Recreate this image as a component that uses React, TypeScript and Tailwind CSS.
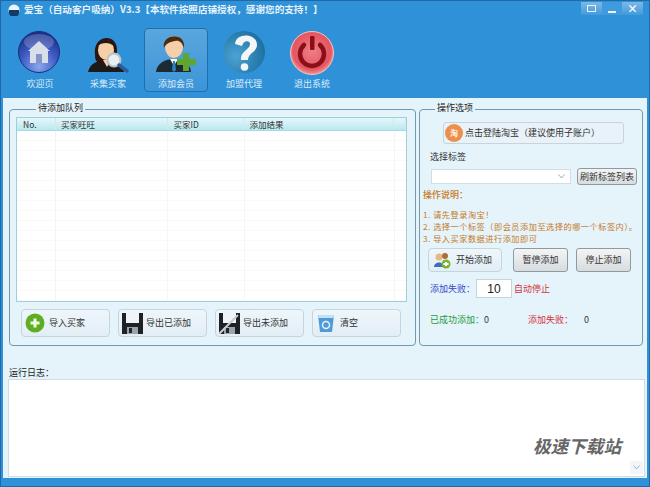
import type { ReactNode } from "react";

const font = "font-['Noto_Sans_CJK_SC','Liberation_Sans',sans-serif]";

function HomeIcon() {
  return (
    <svg width="44" height="44" viewBox="0 0 44 44">
      <defs>
        <radialGradient id="homeBall" cx="50%" cy="85%" r="80%">
          <stop offset="0%" stopColor="#8aa6ee" />
          <stop offset="55%" stopColor="#3f5cc4" />
          <stop offset="100%" stopColor="#1d2f8a" />
        </radialGradient>
      </defs>
      <circle cx="21" cy="21" r="20.5" fill="url(#homeBall)" stroke="#1a2f80" />
      <ellipse cx="21" cy="11" rx="15" ry="8" fill="#fff" opacity="0.2" />
      <path d="M21 10 L32 20 L30 20 L30 32 L12 32 L12 20 L10 20 Z" fill="#d9deea" />
      <rect x="18" y="23" width="6" height="9" fill="#8496c8" />
    </svg>
  );
}

function FemaleIcon() {
  return (
    <svg width="44" height="44" viewBox="0 0 44 44">
      <path d="M2 41 C4 32 12 29 21 29 C31 29 37 32 38 41 Z" fill="#1f1a1a" />
      <path d="M9 24 C6 3 32 1 31 20 C31 27 30 31 27 32 L13 32 C10 31 9 28 9 24 Z" fill="#2a1510" />
      <ellipse cx="20" cy="19" rx="8" ry="10" fill="#f6cfa8" />
      <path d="M11 15 C14 7 27 7 29 16 C24 11 17 11 11 15 Z" fill="#2a1510" />
      <path d="M17 29 L25 29 L21 36 Z" fill="#f6cfa8" />
      <circle cx="28" cy="29" r="6.5" fill="#e9eef0" stroke="#b9c3c8" strokeWidth="2" />
      <path d="M33 34 L41 40" stroke="#2b5f9a" strokeWidth="3.5" strokeLinecap="round" />
    </svg>
  );
}

function MaleIcon() {
  return (
    <svg width="44" height="44" viewBox="0 0 44 44">
      <path d="M2 41 C3 32 11 28 20 28 C30 28 36 32 37 41 Z" fill="#1c2a33" />
      <path d="M16 28 L24 28 L20 35 Z" fill="#fff" />
      <path d="M19 30 L21 30 L22 39 L20 41 L18 39 Z" fill="#2d7fc0" />
      <ellipse cx="20" cy="16" rx="9" ry="11" fill="#f6cfa8" />
      <path d="M10 17 C7 3 32 0 30 17 C28 11 25 9 21 10 C17 11 13 11 10 17 Z" fill="#4a2c12" />
      <path d="M29 22 L35 22 L35 28 L42 28 L42 34 L35 34 L35 40 L29 40 L29 34 L23 34 L23 28 L29 28 Z" fill="#5fa52e" />
    </svg>
  );
}

function HelpIcon() {
  return (
    <svg width="44" height="44" viewBox="0 0 44 44">
      <defs>
        <radialGradient id="helpBall" cx="30%" cy="60%" r="75%">
          <stop offset="0%" stopColor="#4ca4d4" />
          <stop offset="100%" stopColor="#1b6d9c" />
        </radialGradient>
      </defs>
      <circle cx="22" cy="21" r="21" fill="url(#helpBall)" />
      <path
        d="M13 13 C14 1 35 2 35 14 C35 21 26 22 26 29 L19 29 C18 20 28 19 28 13 C28 9 21 9 20 15 Z"
        fill="#f2f6f8"
      />
      <circle cx="22.5" cy="36" r="3.8" fill="#f2f6f8" />
    </svg>
  );
}

function PowerIcon() {
  return (
    <svg width="44" height="44" viewBox="0 0 44 44">
      <defs>
        <radialGradient id="powerBall" cx="50%" cy="45%" r="60%">
          <stop offset="0%" stopColor="#ee8088" />
          <stop offset="72%" stopColor="#e4555f" />
          <stop offset="100%" stopColor="#f8b4b0" />
        </radialGradient>
      </defs>
      <circle cx="22" cy="22" r="21.5" fill="url(#powerBall)" stroke="#f6c2bd" />
      <path d="M14 14 A12 12 0 1 0 30 14" fill="none" stroke="#8a0f18" strokeWidth="4.5" strokeLinecap="round" />
      <rect x="20" y="5" width="4.5" height="14" rx="1" fill="#8a0f18" />
    </svg>
  );
}

function FloppyIcon({ slash }: { slash?: boolean }) {
  return (
    <svg width="21" height="21" viewBox="0 0 21 21">
      <path d="M0 0 H21 V21 H0 Z" fill="#1c2226" />
      <rect x="4" y="0" width="13" height="10" fill="#f0f4f6" />
      <rect x="5" y="14" width="11" height="7" fill="#9aa4a9" />
      <rect x="7" y="15" width="3" height="5" fill="#20262a" />
      {slash && <path d="M0 21 L19 2" stroke="#c8ccd0" strokeWidth="2" />}
    </svg>
  );
}

function ToolItem({ label, active, children }: { label: string; active?: boolean; children: ReactNode }) {
  return (
    <div
      className={`flex h-[64px] w-[64px] flex-col items-center pt-[2px] rounded-sm ${
        active ? "border border-[#1f6fae] bg-gradient-to-b from-[#5aa6dd] to-[#3b95d8]" : "border border-transparent"
      }`}
    >
      {children}
      <span className="mt-[3px] text-[9px] leading-[12px] text-[#dcecf8]">{label}</span>
    </div>
  );
}

function ActionButton({ label, icon, width }: { label: string; icon: ReactNode; width: string }) {
  return (
    <div className={`flex h-[28px] ${width} items-center gap-[3px] rounded-sm border border-[#c5d5de] bg-gradient-to-b from-[#eef6fb] to-[#e2eef5] pl-[2px]`}>
      <span className="flex w-[22px] shrink-0 justify-center">{icon}</span>
      <span className="text-[9px] text-[#333] whitespace-nowrap">{label}</span>
    </div>
  );
}

function GrayButton({ label, width }: { label: string; width: string }) {
  return (
    <div className={`flex h-[24px] ${width} items-center justify-center rounded-[3px] border border-[#8d9aa2] bg-gradient-to-b from-[#f4f4f4] to-[#d8dcdf] text-[9px] text-[#333] whitespace-nowrap`}>
      {label}
    </div>
  );
}

const headers = [
  { label: "No.", width: "w-[39px] pl-[6px]" },
  { label: "买家旺旺", width: "w-[112px] pl-[5px]" },
  { label: "买家ID", width: "w-[77px] pl-[6px]" },
  { label: "添加结果", width: "w-[150px] pl-[5px]" },
  { label: "", width: "w-[12px]" },
];

const rows = Array.from({ length: 17 }, (_, i) => i);

export default function App() {
  return (
    <div className={`${font} relative flex h-[487px] w-[650px] flex-col overflow-hidden border border-[#1e6aa8] bg-[#2f92d9] px-[2px] pb-[8px]`}>
      {/* title bar */}
      <div className="flex h-[17px] items-center pl-[5px] pt-[1px]">
        <svg width="12" height="12" viewBox="0 0 12 12" className="mr-[4px]">
          <circle cx="6" cy="6" r="5.5" fill="#eef5fa" />
          <path d="M1 6 H11 V9 A5 4 0 0 1 1 9 Z" fill="#123c66" />
        </svg>
        <span className="text-[9.6px] font-bold leading-none whitespace-nowrap text-[#e8f3fb]">
          爱宝（自动客户吸纳）V3.3【本软件按照店铺授权，感谢您的支持！】
        </span>
        <div className="ml-auto mr-[4px] flex h-[13px] self-start">
          <span className="flex w-[21px] items-center justify-center bg-gradient-to-b from-[#7db8e3] to-[#3f9ade]">
            <span className="h-[7px] w-[9px] border border-[#e8f3fb]" />
          </span>
          <span className="flex w-[20px] items-end justify-center bg-[#3f9ade] pb-[2px]">
            <span className="h-[2px] w-[8px] bg-[#e8f3fb]" />
          </span>
          <span className="flex w-[21px] items-center justify-center bg-gradient-to-b from-[#7db8e3] to-[#3f9ade] text-[11px] font-bold leading-none text-white">×</span>
        </div>
      </div>

      {/* toolbar */}
      <div className="flex h-[80px] items-start gap-[4px] pl-[5px] pt-[10px]">
        <ToolItem label="欢迎页"><HomeIcon /></ToolItem>
        <ToolItem label="采集买家"><FemaleIcon /></ToolItem>
        <ToolItem label="添加会员" active><MaleIcon /></ToolItem>
        <ToolItem label="加盟代理"><HelpIcon /></ToolItem>
        <ToolItem label="退出系统"><PowerIcon /></ToolItem>
      </div>

      {/* content */}
      <div className="relative flex flex-1 flex-col bg-[#e5f3fb] pl-[6px] pr-[4px] pt-[4px]">
        <div className="flex gap-[3px]">
          <fieldset className="h-[244px] w-[407px] rounded-sm border border-[#6f9bb0] px-[6px]">
            <legend className="ml-[20px] h-[15px] px-[2px] text-[9px] leading-[12px] text-[#222]">待添加队列</legend>
            <div className="h-[185px] w-[391px] overflow-hidden border border-[#9fd0da] bg-white">
              <div className="flex h-[13px] border-b border-[#a5dbe4] bg-gradient-to-b from-[#e6f7fa] to-[#b9e8ef]">
                {headers.map((h) => (
                  <div key={h.label} className={`${h.width} border-r border-[#cfeaef] text-[8.5px] leading-[12px] text-[#333]`}>
                    {h.label}
                  </div>
                ))}
              </div>
              {rows.map((r) => (
                <div key={r} className="flex h-[10px] border-b border-[#faf9f5]">
                  <div className="w-[39px] border-r border-[#f3f3f0]" />
                  <div className="w-[112px] border-r border-[#f5f5f2]" />
                  <div className="w-[77px] border-r border-[#f5f5f2]" />
                  <div className="w-[150px] border-r border-[#f5f5f2]" />
                </div>
              ))}
            </div>
            <div className="mt-[7px] flex gap-[8px] pl-[5px]">
              <ActionButton
                width="w-[89px]"
                label="导入买家"
                icon={
                  <svg width="20" height="20" viewBox="0 0 20 20">
                    <circle cx="10" cy="10" r="9.5" fill="#5fae22" />
                    <path d="M8.5 5.5 H11.5 V8.5 H14.5 V11.5 H11.5 V14.5 H8.5 V11.5 H5.5 V8.5 H8.5 Z" fill="#f2fbe6" />
                  </svg>
                }
              />
              <ActionButton width="w-[89px]" label="导出已添加" icon={<FloppyIcon />} />
              <ActionButton width="w-[89px]" label="导出未添加" icon={<FloppyIcon slash />} />
              <ActionButton
                width="w-[89px]"
                label="清空"
                icon={
                  <svg width="18" height="20" viewBox="0 0 18 20">
                    <path d="M1 2 H17 L15 19 H3 Z" fill="#4f9bd8" />
                    <path d="M1 2 H17 L16.5 5 H1.5 Z" fill="#c4e0f2" />
                    <circle cx="9" cy="12" r="3.5" fill="none" stroke="#e6f3fb" strokeWidth="1.5" />
                  </svg>
                }
              />
            </div>
          </fieldset>

          <fieldset className="h-[244px] w-[224px] rounded-sm border border-[#6f9bb0] px-[3px]">
            <legend className="ml-[12px] h-[15px] px-[2px] text-[9px] leading-[12px] text-[#222]">操作选项</legend>
            <div className="ml-[20px] mt-[5px] flex h-[22px] w-[181px] items-center rounded-[3px] border border-[#c5d5de] bg-[#e9f2f8] pl-[1px]">
              <span className="mr-[2px] flex h-[18px] w-[18px] items-center justify-center rounded-full bg-[#ec8f4b] text-[8px] font-bold text-[#fff3e6]">淘</span>
              <span className="text-[9px] text-[#333] whitespace-nowrap">点击登陆淘宝（建议使用子账户）</span>
            </div>
            <div className="mt-[7px] pl-[7px] text-[9px] leading-[12px] text-[#333]">选择标签</div>
            <div className="mt-[5px] flex items-center gap-[6px] pl-[8px]">
              <div className="flex h-[15px] w-[140px] items-center justify-end border border-[#d3dde3] bg-white pr-[5px]">
                <svg width="7" height="5" viewBox="0 0 7 5"><path d="M0.5 0.5 L3.5 4 L6.5 0.5" fill="none" stroke="#9ab" /></svg>
              </div>
              <GrayButton label="刷新标签列表" width="w-[60px] !h-[17px]" />
            </div>
            <div className="mt-[4px] text-[9px] font-medium leading-[12px] text-[#c8791a]">操作说明：</div>
            <div className="mt-[7px] text-[8.2px] leading-[12px] tracking-[0.5px] whitespace-nowrap text-[#c8791a]">
              <div>1. 请先登录淘宝！</div>
              <div>2. 选择一个标签（即会员添加至选择的哪一个标签内）。</div>
              <div>3. 导入买家数据进行添加即可</div>
            </div>
            <div className="mt-[4px] flex items-center pl-[5px]">
              <ActionButton
                width="w-[74px] !h-[24px]"
                label="开始添加"
                icon={
                  <svg width="18" height="18" viewBox="0 0 18 18">
                    <circle cx="6" cy="6" r="3.5" fill="#e8b880" />
                    <path d="M1 16 C1 10 11 10 11 16 Z" fill="#3f6fb8" />
                    <circle cx="12" cy="5" r="3" fill="#a96f38" />
                    <circle cx="13" cy="13" r="4.5" fill="#79b52e" />
                    <path d="M12 11 H14 V12 H15.5 V14 H14 V15 H12 V14 H10.5 V12 H12 Z" fill="#fff" />
                  </svg>
                }
              />
              <GrayButton label="暂停添加" width="w-[55px] ml-[11px]" />
              <GrayButton label="停止添加" width="w-[55px] ml-[8px]" />
            </div>
            <div className="mt-[7px] flex items-center pl-[7px] text-[9px]">
              <span className="w-[46px] whitespace-nowrap text-[#3a48c8]">添加失败：</span>
              <span className="flex h-[19px] w-[36px] items-center justify-center border border-[#c8d4dc] bg-white text-[12px] leading-none text-[#222] font-['Liberation_Sans']">10</span>
              <span className="ml-[2px] whitespace-nowrap text-[#d8303a]">自动停止</span>
            </div>
            <div className="mt-[16px] flex items-center pl-[7px] text-[9px] leading-[12px]">
              <span className="whitespace-nowrap text-[#1f9a3a]">已成功添加：</span>
              <span className="text-[#333]">0</span>
              <span className="ml-[39px] whitespace-nowrap text-[#d8303a]">添加失败：</span>
              <span className="ml-[11px] text-[#333]">0</span>
            </div>
          </fieldset>
        </div>

        <div className="mt-[21px] text-[9px] leading-[12px] text-[#222]">运行日志：</div>
        <div className="relative -ml-[1px] -mr-[2px] h-[98px] border border-[#cfdde5] bg-white">
          <span className="absolute bottom-[2px] right-[1px] flex h-[13px] w-[13px] items-center justify-center bg-[#f1f6fa]">
            <svg width="7" height="5" viewBox="0 0 7 5"><path d="M0.5 0.5 L3.5 4 L6.5 0.5" fill="none" stroke="#9fb6c6" /></svg>
          </span>
        </div>
        {/* watermark */}
        <span className="absolute bottom-[23px] right-[26px] text-[17.6px] font-bold italic leading-none whitespace-nowrap text-[#666]">
          极速下载站
        </span>
      </div>
    </div>
  );
}
